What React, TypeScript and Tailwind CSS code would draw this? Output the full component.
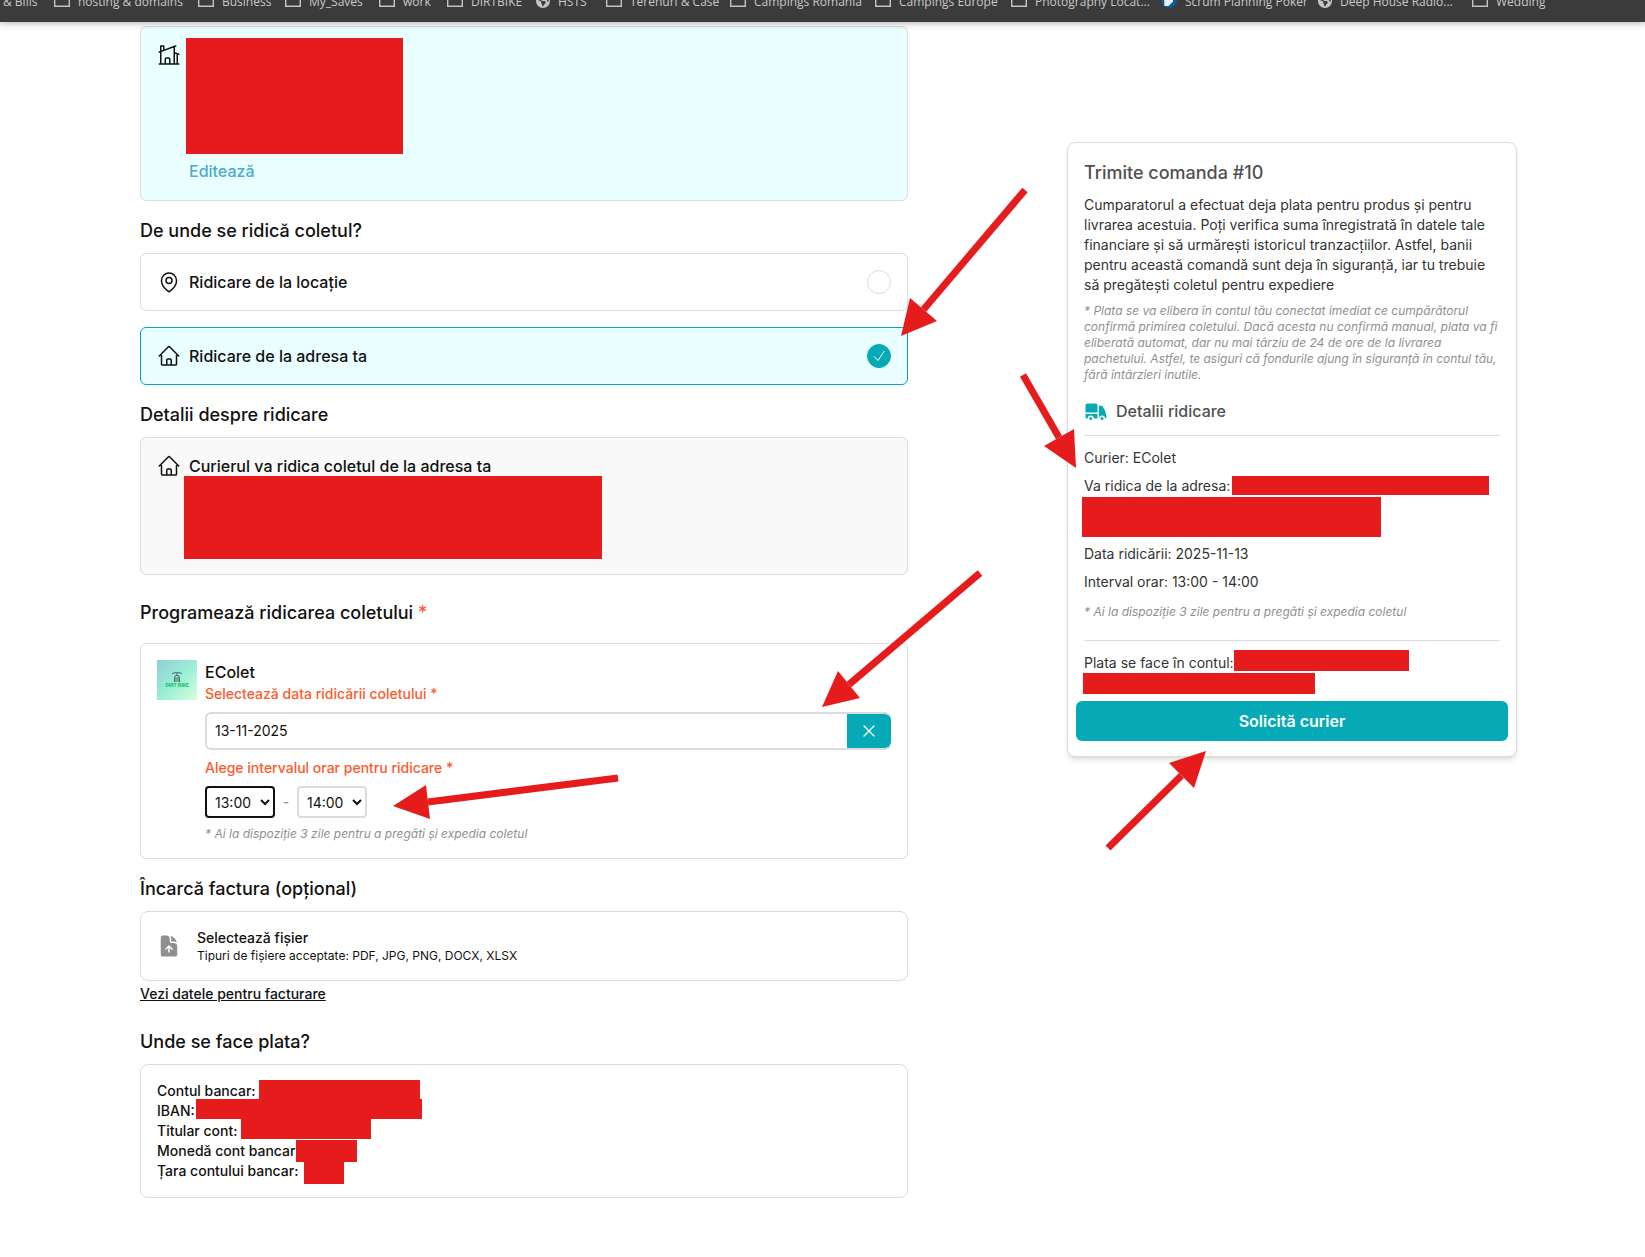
import { useState } from "react";
import type { ReactNode } from "react";
import clsx from "clsx";
import { FaEarthAmericas } from "react-icons/fa6";
import {
  HiDocumentArrowUp,
  HiOutlineCheck,
  HiOutlineHome,
  HiOutlineHomeModern,
  HiOutlineMapPin,
  HiOutlineXMark,
  HiTruck,
} from "react-icons/hi2";

type BookmarkKind = "none" | "folder" | "globe" | "poker";

interface Bookmark {
  label: string;
  kind: BookmarkKind;
  width: string;
}

const bookmarks: Bookmark[] = [
  { label: "& Bills", kind: "none", width: "w-[33px]" },
  { label: "hosting & domains", kind: "folder", width: "w-[102px]" },
  { label: "Business", kind: "folder", width: "w-[45px]" },
  { label: "My_Saves", kind: "folder", width: "w-[52px]" },
  { label: "work", kind: "folder", width: "w-[26px]" },
  { label: "DIRTBIKE", kind: "folder", width: "w-[47px]" },
  { label: "HSTS", kind: "globe", width: "w-[30px]" },
  { label: "Terenuri & Case", kind: "folder", width: "w-[82px]" },
  { label: "Campings Romania", kind: "folder", width: "w-[103px]" },
  { label: "Campings Europe", kind: "folder", width: "w-[94px]" },
  { label: "Photography Locat...", kind: "folder", width: "w-[108px]" },
  { label: "Scrum Planning Poker", kind: "poker", width: "w-[115px]" },
  { label: "Deep House Radio...", kind: "globe", width: "w-[114px]" },
  { label: "Wedding", kind: "folder", width: "w-[48px]" },
];

const hours = ["09:00", "10:00", "11:00", "12:00", "13:00", "14:00", "15:00", "16:00"];

const arrows = [
  { from: [1025, 190], tip: [901, 336], a: [910, 298], b: [937, 321] },
  { from: [1023, 375], tip: [1076, 468], a: [1074, 429], b: [1044, 446] },
  { from: [980, 573], tip: [822, 707], a: [838, 671], b: [860, 698] },
  { from: [618, 778], tip: [393, 806], a: [426, 785], b: [430, 819] },
  { from: [1108, 848], tip: [1206, 751], a: [1169, 763], b: [1194, 788] },
];

function BookmarkIcon({ kind }: { kind: BookmarkKind }) {
  if (kind === "none") return null;
  if (kind === "globe") {
    return <FaEarthAmericas className="size-3.5 shrink-0 text-[#c4c4c4]" />;
  }
  if (kind === "poker") {
    return (
      <svg className="size-4 shrink-0" viewBox="0 0 16 16">
        <circle cx="8" cy="6" r="8" fill="#0b5c94" />
        <path d="M3 2h9v5.500l-4.500 4.500H3.500z" fill="#e8f1f6" />
      </svg>
    );
  }
  return (
    <svg className="size-4 shrink-0" viewBox="0 0 16 16" fill="none" stroke="#c4c4c4">
      <path d="M.7 1.500V.7h5l1.500 2h8.100V12.300H.7z" strokeWidth="1.400" />
    </svg>
  );
}

function BookmarksBar() {
  return (
    <nav className="relative z-10 h-[22px] overflow-hidden bg-[#3b3b3b] px-[3px] font-['Open_Sans','Noto_Sans',sans-serif] text-xs font-normal text-[#c9c9c9] shadow-[0_0_8px_rgba(0,0,0,0.4)]">
      <div className="-mt-1.5 flex gap-[18px] whitespace-nowrap">
        {bookmarks.map((b) => (
          <a key={b.label} href="#" className="flex shrink-0 gap-2">
            <BookmarkIcon kind={b.kind} />
            <span className={b.width}>{b.label}</span>
          </a>
        ))}
      </div>
    </nav>
  );
}

// solid block that hides private data, placed relative to its card
function Redaction({ className }: { className: string }) {
  return <span aria-hidden="true" className={clsx("absolute bg-[#e61c1c]", className)} />;
}

function Card({ className, children }: { className?: string; children: ReactNode }) {
  return (
    <div className={clsx("relative rounded-md border p-4", className ?? "border-[#dcdcdc] bg-white")}>
      {children}
    </div>
  );
}

function SectionTitle({ className, children }: { className?: string; children: ReactNode }) {
  return <h2 className={clsx("text-lg font-medium", className ?? "mt-4 mb-2")}>{children}</h2>;
}

interface PickupOptionProps {
  id: string;
  label: string;
  icon: ReactNode;
  selected: boolean;
  onSelect: () => void;
}

function PickupOption({ id, label, icon, selected, onSelect }: PickupOptionProps) {
  return (
    <label
      htmlFor={id}
      className={clsx(
        "flex cursor-pointer items-center gap-2 rounded-md border p-4",
        selected ? "border-[#06a9b6] bg-[#eaffff]" : "border-[#dcdcdc] bg-white"
      )}
    >
      {icon}
      <span className="flex-1">{label}</span>
      <span className="relative flex size-6">
        <input
          id={id}
          type="radio"
          name="pickup"
          checked={selected}
          onChange={onSelect}
          className="size-6 cursor-pointer appearance-none rounded-full border border-[#dcdcdc] bg-white checked:border-[#06a9b6] checked:bg-[#06a9b6]"
        />
        {selected && <HiOutlineCheck className="pointer-events-none absolute inset-1 size-4 text-white" />}
      </span>
    </label>
  );
}

function HourSelect({
  label,
  value,
  onChange,
  active,
}: {
  label: string;
  value: string;
  onChange: (v: string) => void;
  active?: boolean;
}) {
  return (
    <select
      aria-label={label}
      value={value}
      onChange={(e) => onChange(e.target.value)}
      className={clsx(
        "h-8 w-[70px] rounded border-2 bg-white pl-1 text-sm font-normal text-[#111] outline-none",
        active ? "border-[#111]" : "border-[#dcdcdc]"
      )}
    >
      {hours.map((h) => (
        <option key={h}>{h}</option>
      ))}
    </select>
  );
}

function CourierLogo() {
  return (
    <svg className="size-10 shrink-0" viewBox="0 0 40 40">
      <defs>
        <linearGradient id="logo-bg" x1="0" y1="0" x2="1" y2="1">
          <stop offset="0" stopColor="#8fcfd6" />
          <stop offset="0.5" stopColor="#9aeed6" />
          <stop offset="1" stopColor="#d6ffda" />
        </linearGradient>
      </defs>
      <rect width="40" height="40" fill="url(#logo-bg)" />
      <path d="M15 13.500l3-.8h4l3 .8M20 13v3M17.500 22v-4l1-2.500h3l1 2.500v4M19 17v5M21 17v5" fill="none" stroke="#4b6b6b" />
      <text x="20" y="27" textAnchor="middle" fontSize="5" fontWeight="900" fill="#22c56b" fontFamily="Roboto, sans-serif">
        DIRT BIKE
      </text>
    </svg>
  );
}

function PickupForm({
  date,
  setDate,
  start,
  setStart,
  end,
  setEnd,
}: {
  date: string;
  setDate: (v: string) => void;
  start: string;
  setStart: (v: string) => void;
  end: string;
  setEnd: (v: string) => void;
}) {
  return (
    <Card>
      <div className="flex gap-2">
        <CourierLogo />
        <div className="min-w-0 flex-1">
          <p>EColet</p>
          <label htmlFor="pickup-date" className="block text-sm text-[#ff5a2b]">
            Selectează data ridicării coletului *
          </label>
          <div className="mt-2 flex h-[38px] overflow-hidden rounded-md border-2 border-r-0 border-[#dcdcdc]">
            <input
              id="pickup-date"
              type="text"
              value={date}
              onChange={(e) => setDate(e.target.value)}
              className="min-w-0 flex-1 px-2 text-sm font-normal outline-none"
            />
            <button
              type="button"
              aria-label="Șterge data"
              onClick={() => setDate("")}
              className="flex w-11 cursor-pointer items-center justify-center rounded-r-md bg-[#06a9b6] text-white"
            >
              <HiOutlineXMark className="size-5" />
            </button>
          </div>
          <p className="mt-2 text-sm text-[#ff5a2b]">Alege intervalul orar pentru ridicare *</p>
          <div className="mt-2 flex items-center text-sm text-[#999]">
            <HourSelect label="De la ora" value={start} onChange={setStart} active />
            <span className="w-[22px] text-center">-</span>
            <HourSelect label="Până la ora" value={end} onChange={setEnd} />
          </div>
          <p className="mt-2 text-xs font-normal text-[#8f8f8f] italic">
            * Ai la dispoziție 3 zile pentru a pregăti și expedia coletul
          </p>
        </div>
      </div>
    </Card>
  );
}

function OrderSummary({ start, end }: { start: string; end: string }) {
  return (
    <aside className="relative mt-[116px] w-[450px] shrink-0 rounded-lg border border-[#dcdcdc] bg-white px-4 pt-4 pb-[15px] text-sm font-normal text-[#333] shadow-md">
      <h2 className="text-lg font-medium text-[#505050]">Trimite comanda #10</h2>
      <p className="mt-2">
        Cumparatorul a efectuat deja plata pentru produs și pentru livrarea acestuia. Poți verifica suma înregistrată în
        datele tale financiare și să urmărești istoricul tranzacțiilor. Astfel, banii pentru această comandă sunt deja în
        siguranță, iar tu trebuie să pregătești coletul pentru expediere
      </p>
      <p className="mt-2 text-xs text-[#8f8f8f] italic">
        * Plata se va elibera în contul tău conectat imediat ce cumpărătorul confirmă primirea coletului. Dacă acesta nu
        confirmă manual, plata va fi eliberată automat, dar nu mai târziu de 24 de ore de la livrarea pachetului. Astfel,
        te asiguri că fondurile ajung în siguranță în contul tău, fără întârzieri inutile.
      </p>
      <div className="mt-4 flex items-center gap-2 border-b border-[#dcdcdc] pb-3 text-base text-[#505050]">
        <HiTruck className="size-6 text-[#06a9b6]" />
        <h3 className="font-medium">Detalii ridicare</h3>
      </div>
      <p className="mt-3">Curier: EColet</p>
      <p className="mt-2 h-15">Va ridica de la adresa:</p>
      <p className="mt-2">Data ridicării: 2025-11-13</p>
      <p className="mt-2">
        Interval orar: {start} - {end}
      </p>
      <p className="mt-3 border-b border-[#dcdcdc] pb-5 text-xs text-[#8f8f8f] italic">
        * Ai la dispoziție 3 zile pentru a pregăti și expedia coletul
      </p>
      <p className="mt-3 h-10">Plata se face în contul:</p>
      <div className="-mx-2 mt-2">
        <button type="button" className="h-10 w-full cursor-pointer rounded-md bg-[#06a9b6] text-base font-semibold text-white">
          Solicită curier
        </button>
      </div>
      <Redaction className="top-[333px] left-[164px] h-[19px] w-[257px]" />
      <Redaction className="top-[354px] left-[14px] h-[40px] w-[299px]" />
      <Redaction className="top-[507px] left-[166px] h-[21px] w-[175px]" />
      <Redaction className="top-[530px] left-[15px] h-[21px] w-[232px]" />
    </aside>
  );
}

function Arrows() {
  return (
    <svg className="pointer-events-none absolute top-0 left-0 z-20" width="1645" height="1257" aria-hidden="true">
      {arrows.map(({ from, tip, a, b }) => {
        const mx = (a[0] + b[0]) / 2;
        const my = (a[1] + b[1]) / 2;
        return (
          <g key={tip.join("-")} fill="#e61c1c" stroke="#e61c1c">
            <line x1={from[0]} y1={from[1]} x2={mx} y2={my} strokeWidth="7" />
            <polygon points={`${tip.join()} ${a.join()} ${b.join()}`} stroke="none" />
          </g>
        );
      })}
    </svg>
  );
}

export default function App() {
  const [pickup, setPickup] = useState("address");
  const [date, setDate] = useState("13-11-2025");
  const [start, setStart] = useState("13:00");
  const [end, setEnd] = useState("14:00");

  return (
    <div className="relative min-h-screen overflow-x-hidden bg-white font-['Inter','Open_Sans',sans-serif] font-medium text-[#111]">
      <BookmarksBar />
      <main className="flex items-start justify-between gap-[159px] pt-1 pr-32 pl-[140px]">
        <div className="min-w-0 flex-1">
          <Card className="border-[#dcdcdc] bg-[#eaffff]">
            <div className="flex h-[141px] gap-2">
              <HiOutlineHomeModern className="size-6" />
              <a href="#" className="self-end pb-px text-[#4bacca]">
                Editează
              </a>
            </div>
            <Redaction className="top-[11px] left-[45px] h-[116px] w-[217px]" />
          </Card>

          <SectionTitle>De unde se ridică coletul?</SectionTitle>
          <div className="flex flex-col gap-4">
            <PickupOption
              id="pickup-location"
              label="Ridicare de la locație"
              icon={<HiOutlineMapPin className="size-6" />}
              selected={pickup === "location"}
              onSelect={() => setPickup("location")}
            />
            <PickupOption
              id="pickup-address"
              label="Ridicare de la adresa ta"
              icon={<HiOutlineHome className="size-6" />}
              selected={pickup === "address"}
              onSelect={() => setPickup("address")}
            />
          </div>

          <SectionTitle>Detalii despre ridicare</SectionTitle>
          <Card className="border-[#dcdcdc] bg-[#f9f9f9]">
            <div className="flex h-[104px] gap-2">
              <HiOutlineHome className="size-6" />
              <p>Curierul va ridica coletul de la adresa ta</p>
            </div>
            <Redaction className="top-[38px] left-[43px] h-[83px] w-[418px]" />
          </Card>

          <SectionTitle className="mt-6 mb-4">
            Programează ridicarea coletului <span className="text-[#ff5a2b]">*</span>
          </SectionTitle>
          <PickupForm
            date={date}
            setDate={setDate}
            start={start}
            setStart={setStart}
            end={end}
            setEnd={setEnd}
          />

          <SectionTitle>Încarcă factura (opțional)</SectionTitle>
          <label
            htmlFor="invoice"
            className="relative flex cursor-pointer items-center gap-4 rounded-lg border border-[#dcdcdc] p-4"
          >
            <HiDocumentArrowUp className="size-6 text-[#8f8f8f]" />
            <span className="flex flex-col">
              <span className="text-sm">Selectează fișier</span>
              <span className="text-xs font-normal">Tipuri de fișiere acceptate: PDF, JPG, PNG, DOCX, XLSX</span>
            </span>
            <input id="invoice" type="file" className="sr-only" />
          </label>
          <div className="mt-[3px] flex text-sm">
            <a href="#" className="underline">
              Vezi datele pentru facturare
            </a>
          </div>

          <SectionTitle className="mt-6 mb-2">Unde se face plata?</SectionTitle>
          <div className="relative rounded-lg border border-[#dcdcdc] p-4 text-sm">
            <p>Contul bancar:</p>
            <p>IBAN:</p>
            <p>Titular cont:</p>
            <p>Monedă cont bancar:</p>
            <p>Țara contului bancar:</p>
            <Redaction className="top-[15px] left-[118px] h-[19px] w-[161px]" />
            <Redaction className="top-[34px] left-[55px] h-[20px] w-[226px]" />
            <Redaction className="top-[54px] left-[100px] h-[20px] w-[130px]" />
            <Redaction className="top-[75px] left-[155px] h-[22px] w-[61px]" />
            <Redaction className="top-[96px] left-[163px] h-[23px] w-[40px]" />
          </div>
        </div>
        <OrderSummary start={start} end={end} />
      </main>
      <Arrows />
    </div>
  );
}
